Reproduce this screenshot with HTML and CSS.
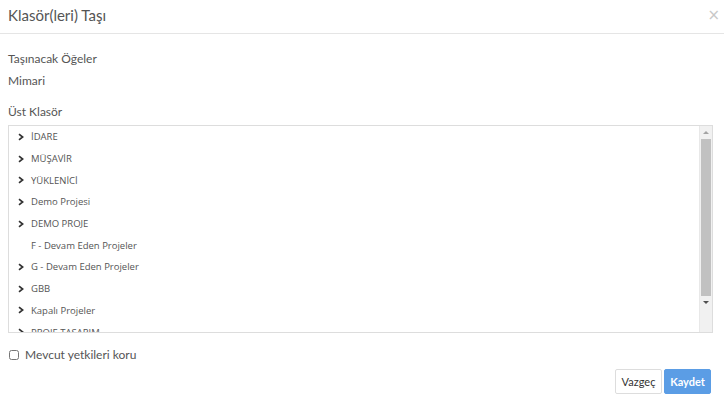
FILE: index.html
```html
<!DOCTYPE html>
<html lang="tr">
<head>
  <meta charset="UTF-8" />
  <title>Klasör(leri) Taşı</title>
  <link rel="stylesheet" href="styles.css">
</head>
<body>
  <div class="modal">
    <div class="modal-header">
      <h4>Klasör(leri) Taşı</h4>
      <span class="close">&times;</span>
    </div>

    <div class="modal-body">
      <label class="field-label">Taşınacak Öğeler</label>
      <div class="field-value">Mimari</div>
      <label class="field-label upper">Üst Klasör</label>

      <div class="tree-box">
        <ul class="tree" id="tree"></ul>
        <div class="scrollbar">
          <div class="arrow up"></div>
          <div class="thumb"></div>
          <div class="arrow down"></div>
        </div>
      </div>

      <label class="check"><input type="checkbox" /> Mevcut yetkileri koru</label>
    </div>

    <div class="modal-footer">
      <button class="btn">Vazgeç</button>
      <button class="btn btn-primary">Kaydet</button>
    </div>
  </div>

  <script>
    const folders = [
      { name: "İDARE", kids: true },
      { name: "MÜŞAVİR", kids: true },
      { name: "YÜKLENİCİ", kids: true },
      { name: "Demo Projesi", kids: true },
      { name: "DEMO PROJE", kids: true },
      { name: "F - Devam Eden Projeler", kids: false },
      { name: "G - Devam Eden Projeler", kids: true },
      { name: "GBB", kids: true },
      { name: "Kapalı Projeler", kids: true },
      { name: "PROJE TASARIM", kids: true }
    ];

    const tree = document.getElementById("tree");
    folders.forEach(f => {
      const li = document.createElement("li");
      li.innerHTML = `
        <span class="caret">${f.kids ? '<svg width="6" height="8" viewBox="0 0 6 8"><path d="M1 1.2 L4.6 4 L1 6.8" fill="none" stroke="#333" stroke-width="1.7"/></svg>' : ''}</span>
        <span class="node">${f.name}</span>
      `;
      tree.appendChild(li);
    });
  </script>
</body>
</html>
```

FILE: styles.css
```css
body {
  margin: 0;
  background: #fff;
  font-family: "Lato", "Open Sans", sans-serif;
  color: #555;
}

.modal {
  width: 724px;
  height: 405px;
  display: flex;
  flex-direction: column;
}

.modal-header {
  height: 34px;
  border-bottom: 1px solid #e5e5e5;
  display: flex;
  align-items: center;
  justify-content: space-between;
  padding: 0 8px;
  box-sizing: border-box;
}

.modal-header h4 {
  margin: 0;
  font-size: 15px;
  font-weight: 400;
  color: #555;
  padding-bottom: 3px;
}

.close {
  font-size: 15px;
  color: #c8c8c8;
  font-family: "DejaVu Sans", sans-serif;
  padding-bottom: 4px;
  margin-right: -4px;
}

.modal-body {
  padding: 17px 11px 0 8px;
  display: flex;
  flex-direction: column;
}

.field-label {
  font-size: 12px;
  color: #555;
  line-height: 16px;
}

.field-value {
  font-size: 12px;
  line-height: 16px;
  margin-top: 6px;
}

.upper {
  margin-top: 15px;
}

.tree-box {
  margin-top: 5px;
  height: 208px;
  border: 1px solid #ddd;
  display: flex;
  overflow: hidden;
  box-sizing: border-box;
}

.tree {
  flex: 1;
  list-style: none;
  margin: 0;
  padding: 0;
  font-family: "Open Sans", sans-serif;
  font-size: 9.5px;
  color: #555;
}

.tree li {
  height: 21.7px;
  display: flex;
  align-items: center;
  padding-left: 8px;
  flex-shrink: 0;
}

.caret {
  width: 12px;
  display: flex;
  align-items: center;
  padding-left: 1px;
}

.node {
  padding-left: 1px;
}

.scrollbar {
  width: 12px;
  background: #f1f1f1;
  display: flex;
  flex-direction: column;
  border-left: 1px solid #e8e8e8;
}

.arrow {
  height: 13px;
  position: relative;
}

.arrow::after {
  content: "";
  position: absolute;
  left: 3px;
  top: 5px;
  border-left: 3px solid transparent;
  border-right: 3px solid transparent;
}

.arrow.up::after {
  border-bottom: 3px solid #a3a3a3;
}

.arrow.down::after {
  border-top: 3px solid #505050;
}

.thumb {
  height: 157px;
  background: #c1c1c1;
  margin: 0 1px;
}

.check {
  margin-top: 14px;
  font-size: 12px;
  color: #555;
  display: flex;
  align-items: center;
}

.check input {
  margin: 0 6px 0 1px;
  width: 10px;
  height: 10px;
}

.modal-footer {
  display: flex;
  justify-content: flex-end;
  gap: 2px;
  padding: 7px 13px 0 0;
}

.btn {
  width: 47px;
  height: 25px;
  padding: 0;
  font-family: "Lato", sans-serif;
  font-size: 11px;
  border: 1px solid #ddd;
  border-radius: 2px;
  background: #fff;
  color: #333;
}

.btn-primary {
  background: #5b9de5;
  border-color: #5b9de5;
  color: #fff;
  font-weight: 700;
}
```
